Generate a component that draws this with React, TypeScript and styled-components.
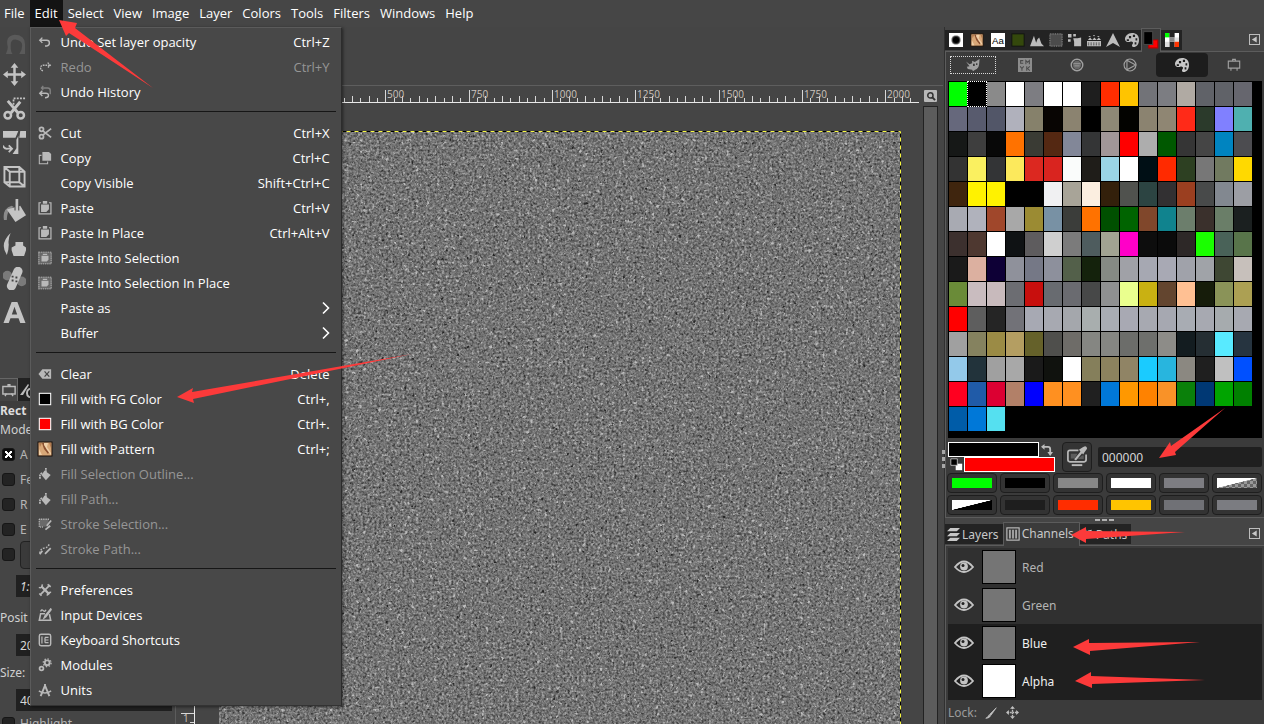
import React from "react";
import styled, { createGlobalStyle, css } from "styled-components";

const UI_FONT = `"Open Sans", "Noto Sans", sans-serif`;
const DOCK_FONT = `"Noto Sans", "DejaVu Sans", sans-serif`;

const GlobalStyle = createGlobalStyle`
  * { box-sizing: border-box; }
  body {
    margin: 0;
    background: #454545;
    color: #fff;
    font-family: ${UI_FONT};
    font-size: 13px;
    overflow: hidden;
  }
  button, input { font: inherit; color: inherit; margin: 0; }
  button { border: 0; padding: 0; background: none; cursor: default; }
`;

/* ---------- shell ---------- */

const Shell = styled.div`
  position: relative;
  display: flex;
  flex-direction: column;
  height: 100vh;
  overflow: hidden;
`;

const MenuBar = styled.nav`
  display: flex;
  height: 27px;
  flex: none;
  margin-left: -1px;
  background: #464646;
  position: relative;
  z-index: 2;
`;

const MenuSlot = styled.div`
  position: relative;
  display: flex;
`;

const MenuTitle = styled.button<{ $open?: boolean }>`
  padding: 0 5px 1px;
  background: ${(p) => (p.$open ? "#131313" : "transparent")};
`;

const Workspace = styled.main`
  display: flex;
  flex: 1;
  min-height: 0;
`;

/* ---------- drop-down menu ---------- */

const Dropdown = styled.div`
  position: absolute;
  top: 100%;
  left: 0;
  width: 312px;
  padding: 2px 0;
  background: #484848;
  border: 1px solid #5b5b5b;
  border-right-color: #2c2c2c;
  border-bottom-color: #333;
  box-shadow: 1px 1px 3px rgba(0, 0, 0, 0.5);
`;

const MenuRow = styled.button<{ $off?: boolean }>`
  display: flex;
  align-items: center;
  width: 100%;
  height: 25px;
  padding: 0 11px 2px 6px;
  text-align: left;
  color: ${(p) => (p.$off ? "#969696" : "#fff")};
`;

const MenuIcon = styled.span`
  display: flex;
  justify-content: center;
  width: 16px;
  margin-right: 8px;
  color: #b9b9b9;
`;

const MenuLabel = styled.span`
  flex: 1;
  white-space: nowrap;
`;

const MenuRule = styled.hr`
  height: 1px;
  margin: 6px 5px 9px;
  border: 0;
  background: #161616;
`;

/* ---------- toolbox column ---------- */

const ToolColumn = styled.aside`
  display: flex;
  flex-direction: column;
  flex: none;
  width: 176px;
  overflow: hidden;
  border-right: 1px solid #5c5c5c;
  font-family: ${DOCK_FONT};
  font-size: 12px;
  color: #d0d0d0;
  background: #454545;
`;

const ToolList = styled.div`
  display: flex;
  flex-direction: column;
  height: 351px;
  flex: none;
`;

const ToolButton = styled.button<{ $short?: boolean }>`
  display: flex;
  align-items: center;
  justify-content: center;
  width: 28px;
  height: ${(p) => (p.$short ? 30 : 34)}px;
  flex: none;
  color: #c4c4c4;
`;

const ToolTabs = styled.div`
  display: flex;
  height: 23px;
  flex: none;
`;

const ToolTab = styled.button<{ $on?: boolean }>`
  display: flex;
  align-items: center;
  justify-content: center;
  width: 18px;
  background: ${(p) => (p.$on ? "#454545" : "#222")};
  border-top: 1px solid ${(p) => (p.$on ? "#666" : "#222")};
  border-right: 1px solid ${(p) => (p.$on ? "#666" : "#222")};
  color: #bcbcbc;
`;

const OptionTitle = styled.h2`
  margin: 0;
  height: 19px;
  flex: none;
  line-height: 19px;
  font-size: 12px;
  font-weight: 700;
  color: #dcdcdc;
  background: #3d3d3d;
`;

const OptionLabel = styled.div<{ $top?: number }>`
  height: 20px;
  flex: none;
  line-height: 20px;
  margin-top: ${(p) => p.$top || 0}px;
`;

const CheckGroup = styled.div`
  flex: none;
  margin-top: 2px;
`;

const CheckRow = styled.label`
  display: flex;
  align-items: center;
  gap: 5px;
  height: 25px;
  padding-left: 2px;
  flex: none;
  white-space: nowrap;
  color: #b5b5b5;
`;

const CheckBox = styled.input`
  appearance: none;
  width: 13px;
  height: 13px;
  margin: 0;
  flex: none;
  border: 1px solid #161616;
  border-radius: 3px;
  background: #232323;
  &:checked {
    background:
      linear-gradient(45deg, transparent 38%, #fff 38%, #fff 62%, transparent 62%) center / 7px 7px no-repeat,
      linear-gradient(-45deg, transparent 38%, #fff 38%, #fff 62%, transparent 62%) center / 7px 7px no-repeat,
      #0c0c0c;
  }
`;

const Combo = styled.button`
  flex: 1;
  height: 28px;
  margin-right: 4px;
  background: #3a3a3a;
  border: 1px solid #222;
  border-radius: 4px;
`;

const OptionInput = styled.input<{ $italic?: boolean; $top: number }>`
  width: 156px;
  height: 22px;
  margin-top: ${(p) => p.$top}px;
  margin-left: 16px;
  padding: 0 4px;
  flex: none;
  border: 0;
  background: #202020;
  color: #d6d6d6;
  font-style: ${(p) => (p.$italic ? "italic" : "normal")};
`;

/* ---------- image window ---------- */

const ImageWindow = styled.section`
  display: flex;
  flex-direction: column;
  flex: 1;
  min-width: 0;
  padding: 58px 1px 0 0;
  background: #454545;
`;

const RulerRow = styled.div`
  display: flex;
  align-items: flex-end;
  height: 18px;
  flex: none;
  border-top: 1px solid #5e5e5e;
  padding-left: 19px;
`;

const HRuler = styled.svg`
  display: block;
  flex: 1;
  min-width: 0;
  height: 17px;
  overflow: hidden;
`;

const ZoomButton = styled.button`
  display: flex;
  align-items: center;
  justify-content: center;
  width: 13px;
  height: 12px;
  margin: 0 6px 1px 5px;
  background: #b8b8b8;
  color: #333;
  border-radius: 1px;
`;

const CanvasRow = styled.div`
  display: flex;
  flex: 1;
  min-height: 0;
`;

const VRuler = styled.svg`
  display: block;
  width: 19px;
  height: 100%;
  flex: none;
`;

const CanvasImage = styled.div`
  flex: 1;
  min-width: 0;
  margin: 28px 22px 0 24px;
`;

const Marquee = styled.svg`
  display: block;
  width: 100%;
  height: 100%;
`;

const ScrollTrack = styled.div`
  width: 15px;
  margin: 3px 5px 0 0;
  flex: none;
  background: #5c5c5c;
  border: 1px solid #222;
  border-bottom: 0;
`;

/* ---------- right dock ---------- */

const Dock = styled.aside`
  position: relative;
  display: flex;
  flex-direction: column;
  flex: none;
  width: 320px;
  border-left: 1px solid #303030;
  background: #454545;
  font-family: ${DOCK_FONT};
  font-size: 12px;
  color: #c8c8c8;
`;

const DockTabs = styled.div`
  display: flex;
  align-items: flex-end;
  height: 25px;
  flex: none;
  border-bottom: 1px solid #5c5c5c;
`;

const IconTab = styled.button<{ $on?: boolean }>`
  display: flex;
  align-items: center;
  justify-content: center;
  width: ${(p) => (p.$on ? 20 : 19)}px;
  height: ${(p) => (p.$on ? 24 : 20)}px;
  margin-bottom: ${(p) => (p.$on ? -1 : 1)}px;
  padding-bottom: ${(p) => (p.$on ? 2 : 0)}px;
  background: ${(p) => (p.$on ? "#3b3b3b" : "#232323")};
  color: #bdbdbd;
  ${(p) =>
    p.$on &&
    css`
      border: 1px solid #5c5c5c;
      border-bottom: 0;
    `}
`;

const WideIconTab = styled(IconTab)`
  width: 21px;
`;

const TabMenu = styled.button`
  display: flex;
  align-items: center;
  justify-content: center;
  width: 11px;
  height: 11px;
  margin: 0 4px 6px auto;
  border: 1px solid #bdbdbd;
  color: #c8c8c8;
`;

const PalettePane = styled.div`
  background: #3b3b3b;
  border-left: 1px solid #5c5c5c;
  border-bottom: 1px solid #5c5c5c;
  flex: none;
  height: 466px;
`;

const SelectorTabs = styled.div`
  display: flex;
  height: 29px;
  padding: 1px 4px 4px 1px;
`;

const SelectorTab = styled.button<{ $on?: boolean; $focus?: boolean }>`
  display: flex;
  align-items: center;
  justify-content: center;
  flex: 1;
  border-radius: 4px;
  color: ${(p) => (p.$on ? "#c8c8c8" : "#a0a0a0")};
  background: ${(p) => (p.$on ? "#1d1d1d" : "transparent")};
  ${(p) =>
    p.$focus &&
    css`
      & > span { border-color: #d8d8d8; }
    `}
`;

const FocusRing = styled.span`
  display: flex;
  align-items: center;
  justify-content: center;
  width: 46px;
  height: 18px;
  border: 1px dotted transparent;
`;

const PaletteBox = styled.div`
  display: grid;
  grid-template-columns: repeat(16, 18px);
  grid-auto-rows: 24px;
  gap: 1px;
  align-content: start;
  height: 357px;
  margin: 0 2px;
  padding: 1px;
  background: #000;
`;

const Swatch = styled.button<{ $c: string; $on?: boolean }>`
  background: ${(p) => p.$c};
  outline: ${(p) => (p.$on ? "1px dotted #fff" : "none")};
`;

const ColorRow = styled.div`
  display: flex;
  height: 30px;
  margin: 4px 2px 1px;
`;

const ColorPair = styled.div`
  display: grid;
  grid-template-columns: 16px 75px 16px;
  grid-template-rows: 15px 15px;
  width: 107px;
`;

const Foreground = styled.button`
  grid-area: 1 / 1 / 2 / 3;
  background: #000;
  border: 1px solid #fff;
`;

const Background = styled.button`
  grid-area: 2 / 2 / 3 / 4;
  background: #f00;
  border: 1px solid #fff;
`;

const PairIcon = styled.button<{ $area: string }>`
  grid-area: ${(p) => p.$area};
  display: flex;
  align-items: center;
  justify-content: center;
  color: #bdbdbd;
`;

const PickButton = styled.button`
  display: flex;
  align-items: center;
  justify-content: center;
  width: 30px;
  margin-left: 7px;
  border: 1px solid #1e1e1e;
  border-radius: 4px;
  background: #343434;
  color: #b8b8b8;
`;

const HexInput = styled.input`
  flex: 1;
  min-width: 0;
  height: 20px;
  align-self: center;
  margin-left: 6px;
  padding: 0 4px;
  border: 0;
  border-radius: 2px;
  background: #1f1f1f;
  color: #d6d6d6;
`;

const HistoryGrid = styled.div`
  display: grid;
  grid-template-columns: repeat(6, 1fr);
  grid-auto-rows: 20px;
  gap: 2px 3px;
  padding: 0 2px 0 1px;
`;

const HistoryButton = styled.button`
  display: flex;
  padding: 4px;
  border: 1px solid #1e1e1e;
  border-radius: 4px;
  background: #333;
`;

const HistoryFill = styled.span<{ $c: string }>`
  flex: 1;
  background: ${(p) => p.$c};
`;

const Grip = styled.div`
  display: flex;
  justify-content: center;
  gap: 2px;
  height: 4px;
  flex: none;
  padding-top: 1px;
  & > i {
    width: 5px;
    height: 2px;
    background: #b0b0b0;
  }
`;

const SideGrip = styled.div`
  position: absolute;
  left: -3px;
  top: 423px;
  display: grid;
  gap: 3px;
  & > i { width: 3px; height: 4px; background: #a8a8a8; }
`;

const TextTabs = styled(DockTabs)`
  height: 24px;
`;

const TextTab = styled.button<{ $on?: boolean }>`
  display: flex;
  align-items: center;
  gap: 2px;
  height: ${(p) => (p.$on ? 24 : 20)}px;
  margin-bottom: ${(p) => (p.$on ? -1 : 1)}px;
  padding: ${(p) => (p.$on ? "0 5px 2px 2px" : "0 4px 0 2px")};
  background: ${(p) => (p.$on ? "#3b3b3b" : "#232323")};
  border: solid ${(p) => (p.$on ? "#5c5c5c" : "#232323")};
  border-width: ${(p) => (p.$on ? "1px 1px 0 1px" : "0")};
`;

const ChannelPane = styled.div`
  display: flex;
  flex-direction: column;
  flex: 1;
  border-left: 1px solid #5c5c5c;
  background: #3b3b3b;
  padding: 2px 2px 0;
`;

const ChannelList = styled.ul`
  margin: 0;
  padding: 0;
  list-style: none;
  background: #303030;
`;

const ChannelRow = styled.li<{ $on: boolean }>`
  display: flex;
  align-items: center;
  height: 38px;
  padding-left: 6px;
  background: ${(p) => (p.$on ? "#1f1f1f" : "transparent")};
  color: ${(p) => (p.$on ? "#f0f0f0" : "#b4b4b4")};
`;

const EyeButton = styled.button`
  display: flex;
  color: #c4c4c4;
`;

const Thumb = styled.span<{ $c: string }>`
  width: 34px;
  height: 34px;
  margin: 0 6px 0 8px;
  border: 1px solid #000;
  background: ${(p) => p.$c};
`;

const LockRow = styled.div`
  display: flex;
  align-items: center;
  gap: 6px;
  height: 25px;
  color: #9c9c9c;
`;

const LockButton = styled.button`
  display: flex;
  align-items: center;
  justify-content: center;
  width: 16px;
  color: #c0c0c0;
`;

const Arrows = styled.svg`
  position: absolute;
  inset: 0;
  width: 100%;
  height: 100%;
  z-index: 3;
  pointer-events: none;
  fill: #fc3a3a;
`;

/* ---------- icons ---------- */

type IconProps = { name: string; size?: number; box?: number };

const STROKE = { fill: "none", stroke: "currentColor", strokeWidth: 1.6 } as const;

const shapes: Record<string, React.ReactNode> = {
  undo: <path d="M5 3 2 6l3 3M2.500 6H10q3 0 3 3t-3 3.500H8" {...STROKE} />,
  redo: <path d="M11 3l3 3-3 3M13.500 6H6Q3 6 3 9t3 3.500" {...STROKE} strokeDasharray="2 1" />,
  history: (
    <>
      <path d="M6 1 4 3.500l2 2M4.500 3.500H11q3 0 3 3v4" {...STROKE} opacity=".5" />
      <path d="M5 6.500 2 9.500l3 3M2.500 9.500H9q3 0 3 2.500t-4 2.500" {...STROKE} />
    </>
  ),
  cut: (
    <>
      <circle cx="4" cy="3.800" r="2.300" {...STROKE} strokeWidth="2" />
      <circle cx="4" cy="12.200" r="2.300" {...STROKE} strokeWidth="2" />
      <path d="M5.500 5.500 15 13M5.500 10.500 15 3" {...STROKE} strokeWidth="2" />
    </>
  ),
  copy: (
    <>
      <path d="M4 5H1.500v9.500H11V12" {...STROKE} strokeWidth="1.200" />
      <path d="M5 1h7.500L15 3.500V11H5z" fill="currentColor" />
    </>
  ),
  paste: (
    <>
      <path d="M3.500 2H1.200v12.800h13.600V2H12.500" {...STROKE} strokeWidth="1.400" />
      <path d="M5.500 0h5v3h-5zM3.500 4h9v5.500l-3 3h-6z" fill="currentColor" />
    </>
  ),
  pasteInto: (
    <>
      <path d="M0 1h16v14H0z" fill="currentColor" opacity=".28" />
      <path d="M1 1.500h14v13H1z" {...STROKE} strokeDasharray="1.500 1" opacity=".6" />
      <path d="M5.500 3h5v1.500h-5zM4 5.500h8V10l-2 2H4z" fill="currentColor" />
    </>
  ),
  clear: (
    <path
      d="M5 2.500h10v11H5L.5 8zM7 5.500 9.200 8 7 10.500l1 1L10.200 9l2.200 2.500 1-1L11.200 8l2.200-2.500-1-1L10.200 7 8 4.500z"
      fill="currentColor"
      fillRule="evenodd"
    />
  ),
  fg: <rect x="1.500" y="1.500" width="13" height="13" fill="#000" stroke="#fff" strokeWidth="1.200" />,
  bg: <rect x="1.500" y="1.500" width="13" height="13" fill="#f00" stroke="#fff" strokeWidth="1.200" />,
  pattern: (
    <>
      <rect x="1" y="1" width="14" height="14" fill="#d9a878" stroke="#1a0f08" />
      <path d="M5 2h3l2 5 2 4-1 2-4-5z" fill="#8a5030" />
      <path d="M7 2h4l-1 4 4 6v2l-4-5-3-5zM2 8l3 6H2z" fill="#f0d0a8" />
      <path d="M2 2h3L3 6zM12 2h2v5z" fill="#b47c50" />
    </>
  ),
  bucket: (
    <>
      <path d="M7.500 4 14.500 9 9 15 4 9z" fill="currentColor" />
      <path d="M9 1v7M2.500 13.500Q1 7.500 5.500 7" {...STROKE} strokeWidth="2" strokeDasharray="2 .8" />
    </>
  ),
  strokeSel: (
    <>
      <path d="M1 2h11v9H1z" fill="currentColor" opacity=".3" />
      <path d="M1.500 2.500h12M1.500 2.500v9h5" {...STROKE} strokeDasharray="1 1" />
      <path d="M15 4 10 10M14 10 8.500 14.500" {...STROKE} strokeWidth="2" />
    </>
  ),
  strokePath: (
    <>
      <path d="M2 13Q3 7 7 7t6-5" {...STROKE} strokeDasharray="2 1.500" />
      <path d="M14.500 7 8 13.500M5 10l-3 4" {...STROKE} strokeWidth="2" />
    </>
  ),
  prefs: (
    <>
      <path d="M4 4l9 9" {...STROKE} strokeWidth="2.600" />
      <path d="M13.500 2.500 3 13" {...STROKE} strokeWidth="2" />
      <path d="M1 5q3.500 1.500 4-3.500M11 1.500l3.500 3M10.500 14.500q.5-4 4.500-4M1.500 12l2.500 2.500" {...STROKE} strokeWidth="1.800" />
    </>
  ),
  input: (
    <>
      <path d="M8 6.500H3L1.500 14h13L13 7" {...STROKE} strokeWidth="1.800" />
      <path d="M14.500 1 8 9l-1 2.500L9 10l6-8zM3 4q1-3 3-1t3-1" {...STROKE} />
    </>
  ),
  keyboard: (
    <>
      <rect x="1.500" y="1.500" width="13" height="13" rx="2" {...STROKE} />
      <path d="M4.500 4v8M8 5h4M8 8h4M8 11h4M8 5v6" {...STROKE} strokeWidth="1.400" />
    </>
  ),
  modules: (
    <>
      <circle cx="10.500" cy="5.500" r="2.800" {...STROKE} strokeWidth="2.200" />
      <circle cx="10.500" cy="5.500" r="4.500" {...STROKE} strokeWidth="1.500" strokeDasharray="1.600 1.900" />
      <circle cx="4" cy="12" r="2.200" {...STROKE} strokeWidth="2" />
    </>
  ),
  units: (
    <>
      <path d="M8 1v3M8 3 3 15M8 3l5 12" {...STROKE} strokeWidth="2.200" />
      <path d="M1 9q7 5 14 0" {...STROKE} />
    </>
  ),
  chevron: <path d="M9 2.500 14.500 8 9 13.500" fill="none" stroke="#fff" strokeWidth="1.600" />,
  warp: <path d="M3 24q2-4 2-7-3-12 7-13 11 0 11 10v10h-6q3-4 3-9t-6-6-6 6 2 9z" fill="#5a5a5a" />,
  move: (
    <>
      <path d="M12 3v18M3 12h18" {...STROKE} strokeWidth="2.600" />
      <path d="M12 0l4 5H8zM12 24l4-5H8zM0 12l5-4v8zM24 12l-5-4v8z" fill="currentColor" />
    </>
  ),
  scissors: (
    <>
      <circle cx="5" cy="19" r="3.400" {...STROKE} strokeWidth="2.600" />
      <circle cx="18.500" cy="19" r="3.400" {...STROKE} strokeWidth="2.600" />
      <path d="M5 4l11 13M18 5 8 17" {...STROKE} strokeWidth="3" />
      <path d="M11 8V1.500h13" {...STROKE} strokeWidth="1.800" strokeDasharray="2 1.300" />
    </>
  ),
  crop: (
    <>
      <path d="M0 0h16L13 7H0zM18 0h6v7h-7zM16 5v19h-6l4-6V9z" fill="currentColor" />
      <path d="M0 15q1 4 5 3.500h4M6 15l3.500 3.500L6 22" {...STROKE} strokeWidth="1.800" />
    </>
  ),
  cube: (
    <path
      d="M1.500 2H17l5.500 5v15.500H7L1.500 18zM1.500 2 7 7h15.500M7 7v15.500M1.500 18H17l5.500 4.500M17 2v16"
      {...STROKE}
      strokeWidth="2"
    />
  ),
  fill: (
    <>
      <path d="M4 11l14-4 6 10-11 7z" fill="currentColor" />
      <path d="M14.500 1v11" stroke="#454545" strokeWidth="5" />
      <path d="M14.500 0v12" stroke="currentColor" strokeWidth="2.800" strokeLinecap="round" />
      <path d="M1 22Q-1 10 9 7l2 1-5 5q-2 3-2 9z" fill="currentColor" opacity=".55" />
    </>
  ),
  clone: (
    <>
      <path d="M4 23Q-4 11 8 0 5 6 6 12q0 6-2 11z" fill="currentColor" />
      <path d="M9 15l4-2V9.500h8V13l3 2v3l-2 6H11l-2-6z" fill="currentColor" />
    </>
  ),
  heal: (
    <>
      <circle cx="4.500" cy="9" r="5" fill="#7a7a7a" />
      <circle cx="19.500" cy="15" r="5" fill="#7a7a7a" />
      <rect x="7.500" y="-1" width="9.500" height="26" rx="4.500" transform="rotate(24 12 12)" fill="currentColor" />
      <path d="M9 9h2v2H9zM13 10h2v2h-2zM9 13h2v2H9zM13 14h2v2h-2z" fill="#444" />
    </>
  ),
  text: <path d="M9 1h6l8.500 22H18l-1.800-5H7.800L6 23H.5zM12 6l-2.800 8h5.600z" fill="currentColor" fillRule="evenodd" />,
  options: (
    <>
      <path d="M1 4h14v8.500H1z" {...STROKE} />
      <path d="M5 12l-1.500 3M11 12l1.500 3M7 4V2h2v2" {...STROKE} />
    </>
  ),
  device: (
    <>
      <path d="M1 13 9 2l1 1-6 10z" fill="currentColor" />
      <path d="M14 7q-6-1-6 4t6 4" {...STROKE} strokeWidth="2" />
    </>
  ),
  brush: (
    <>
      <rect width="16" height="16" fill="#fff" />
      <circle cx="8" cy="8" r="5.500" fill="#999" />
      <circle cx="8" cy="8" r="4.500" fill="#333" />
      <circle cx="8" cy="8" r="3.500" fill="#000" />
    </>
  ),
  font: (
    <>
      <rect width="16" height="16" fill="#fff" />
      <text x="8" y="12" textAnchor="middle" fontSize="11" fontFamily="Liberation Sans, sans-serif" fill="#000">Aa</text>
    </>
  ),
  moss: <rect x="1" y="1" width="14" height="14" fill="#34480c" stroke="#111" />,
  histogram: <path d="M0 15 4.500 3 7 11l1.500-4L10.500 5l2.500 7 3 3z" fill="currentColor" />,
  selection: <rect x="1" y="1" width="14" height="14" fill="#4c4c4c" stroke="#aaa" strokeDasharray="1 1" />,
  history2: (
    <>
      <path d="M0 1h4v4H0zM6 1h3v3H6zM0 7h3v3H0z" fill="currentColor" />
      <path d="M6 6h5l4-1v10H7V10z" fill="currentColor" />
    </>
  ),
  grid: (
    <>
      <path d="M0 9h16v6H0zM1 8l2.500-3L6 8l2.500-3L11 8l2.500-3L16 8z" fill="currentColor" />
      <path d="M1 11.500h14M1 13.500h14" stroke="#333" strokeDasharray="1.500 1.500" />
      <path d="M2 4h2M7 3h2M12 4h2" stroke="currentColor" />
    </>
  ),
  pointer: <path d="M8 0l8 16-8-4.500L0 16z" fill="currentColor" />,
  palette: (
    <path
      fillRule="evenodd"
      fill="currentColor"
      d="M8 0c5 0 8 3 8 8 0 5-3 8-6 8s-2-3-1-4-1-3-3-2-6 0-6-3 3-7 8-7zM4.500 3.500v2.500h2.500V3.500zM9 2v2.500h2.500V2zM12 6v2.500h2V6zM2 7v2h2.500V7zM11 10.500V13h2v-2.500z"
    />
  ),
  fgbg: (
    <>
      <path d="M8 8h6v7H6v-3" fill="#f00" stroke="#b00" />
      <rect x="1.500" y="0.500" width="8" height="11.500" fill="#000" stroke="#444" />
    </>
  ),
  colormap: (
    <>
      <rect width="16" height="16" fill="#fff" />
      <path d="M0 0h5v5H0z" fill="#0f0" />
      <path d="M5 0h6v5H5zM5 10h6v6H5z" fill="#222" />
      <path d="M11 5h5v5h-5zM0 10h5v6H0z" fill="#ddd" />
      <path d="M5 5h6v5H5z" fill="#888" />
      <path d="M11 10h5v6h-5z" fill="#f30" />
    </>
  ),
  wilber: (
    <path
      fill="currentColor"
      fillRule="evenodd"
      d="M0 4l4 3 3-1V3l3 1.500L15.500 1 15 7q-.5 5-4.500 6.500L8 15l-1-1.500-5-1-1-2.500 3-.5zM8 6.500V9h2V6.500zM11.500 6v2h1.500V6z"
    />
  ),
  cmyk: (
    <>
      <rect width="16" height="16" fill="#8c8c8c" />
      <path d="M6 3H3v3h3M9 7V3l2 2 2-2v4M2.500 9.500 4.500 12l2-2.500M4.500 12v2.500M10 9.500v5M13.500 9.500 11 12l2.500 2.500" {...STROKE} stroke="#4a4a4a" strokeWidth="1.200" />
    </>
  ),
  water: (
    <>
      <circle cx="8" cy="8" r="6.600" {...STROKE} />
      <circle cx="8" cy="8" r="4.800" fill="currentColor" opacity=".45" />
      <path d="M4 6.500h8M5 9h6" stroke="currentColor" />
    </>
  ),
  wheel: (
    <>
      <circle cx="8" cy="8" r="6.800" {...STROKE} strokeWidth="1.300" />
      <path d="M4.500 2.500 14.500 8l-10 5.500z" {...STROKE} strokeWidth="1.300" />
    </>
  ),
  scales: (
    <>
      <path d="M1.500 3.500h13v8h-13z" {...STROKE} strokeWidth="1.300" />
      <path d="M4.500 11.500v3M11.500 11.500v3M6.500 3.500v-2h3v2" {...STROKE} strokeWidth="1.300" />
    </>
  ),
  triangle: <path d="M13 1v14L2 8z" fill="currentColor" />,
  magnifier: (
    <>
      <circle cx="7" cy="7" r="4.200" fill="none" stroke="currentColor" strokeWidth="2.400" />
      <path d="M10 10l4.500 4.500" stroke="currentColor" strokeWidth="3" />
    </>
  ),
  swap: (
    <>
      <path d="M4 4h6q3 0 3 3v5" {...STROKE} strokeWidth="2.600" />
      <path d="M0 4l5-4v8zM13 17l-4-5.500h8z" fill="currentColor" />
    </>
  ),
  reset: (
    <>
      <path d="M7 7h8v8H7z" fill="#fff" />
      <path d="M1 1h8v8H1z" fill="#000" stroke="#ccc" />
    </>
  ),
  pick: (
    <>
      <path d="M13 4.500H4Q2 4.500 2 6.500v8q0 2 2 2h15q2 0 2-2V9" {...STROKE} strokeWidth="1.800" />
      <path d="M6 19h11v2H6z" fill="currentColor" />
      <path d="M5 8h7l-3 5H5zM17 10h1.500v3.500H12z" fill="currentColor" opacity=".3" />
      <path d="M9.500 14.500 17 5.500" stroke="currentColor" strokeWidth="2.400" />
      <path d="M13.500 4l2-1.500L18 1q4-2 4 2l-3 4-1 2z" fill="currentColor" />
    </>
  ),
  layers: <path d="M4 0h12l-4 4H0zM4 6h12l-4 4H0zM4 12h12l-4 4H0z" fill="currentColor" />,
  channels: (
    <>
      <rect x="1" y="1" width="14" height="14" {...STROKE} strokeWidth="1.200" />
      <path d="M4.500 3v10M8 3v10M11.500 3v10" stroke="currentColor" strokeWidth="1.600" />
    </>
  ),
  paths: <path d="M3 14Q3 4 13 3M1 3h4v4H1z" {...STROKE} />,
  eye: (
    <>
      <path d="M1 10Q10-1 19 10 10 20 1 10z" fill="none" stroke="currentColor" strokeWidth="1.800" />
      <circle cx="10" cy="9.500" r="3.900" fill="currentColor" />
      <circle cx="9" cy="8.500" r="1.500" fill="#222" />
    </>
  ),
  paint: <path d="M15 1 8 11l-2-1zM7.500 11.500Q6 15 1 15q3-1 4-4z" fill="currentColor" stroke="currentColor" />,
  lockMove: (
    <>
      <path d="M8 2v12M2 8h12" {...STROKE} strokeDasharray="2 1" />
      <path d="M8 0l3 3.500H5zM8 16l3-3.500H5zM0 8l3.500-3v6zM16 8l-3.500-3v6z" fill="currentColor" />
    </>
  ),
};

const Icon = ({ name, size = 14, box = 16 }: IconProps) => (
  <svg width={size} height={size} viewBox={`0 0 ${box} ${box}`} aria-hidden="true">
    {shapes[name]}
  </svg>
);

/* ---------- data ---------- */

type Entry = { icon?: string; label: string; keys?: string; off?: boolean; sub?: boolean };

const EDIT_MENU: Entry[][] = [
  [
    { icon: "undo", label: "Undo Set layer opacity", keys: "Ctrl+Z" },
    { icon: "redo", label: "Redo", keys: "Ctrl+Y", off: true },
    { icon: "history", label: "Undo History" },
  ],
  [
    { icon: "cut", label: "Cut", keys: "Ctrl+X" },
    { icon: "copy", label: "Copy", keys: "Ctrl+C" },
    { label: "Copy Visible", keys: "Shift+Ctrl+C" },
    { icon: "paste", label: "Paste", keys: "Ctrl+V" },
    { icon: "paste", label: "Paste In Place", keys: "Ctrl+Alt+V" },
    { icon: "pasteInto", label: "Paste Into Selection" },
    { icon: "pasteInto", label: "Paste Into Selection In Place" },
    { label: "Paste as", sub: true },
    { label: "Buffer", sub: true },
  ],
  [
    { icon: "clear", label: "Clear", keys: "Delete" },
    { icon: "fg", label: "Fill with FG Color", keys: "Ctrl+," },
    { icon: "bg", label: "Fill with BG Color", keys: "Ctrl+." },
    { icon: "pattern", label: "Fill with Pattern", keys: "Ctrl+;" },
    { icon: "bucket", label: "Fill Selection Outline...", off: true },
    { icon: "bucket", label: "Fill Path...", off: true },
    { icon: "strokeSel", label: "Stroke Selection...", off: true },
    { icon: "strokePath", label: "Stroke Path...", off: true },
  ],
  [
    { icon: "prefs", label: "Preferences" },
    { icon: "input", label: "Input Devices" },
    { icon: "keyboard", label: "Keyboard Shortcuts" },
    { icon: "modules", label: "Modules" },
    { icon: "units", label: "Units" },
  ],
];

const TITLES = ["File", "Edit", "Select", "View", "Image", "Layer", "Colors", "Tools", "Filters", "Windows", "Help"];
const TOOLS = ["warp", "move", "scissors", "crop", "cube", "fill", "clone", "heal", "text"];
const CHECKS = ["A", "Fe", "R", "E"];

const PALETTE = `
00ff00 000000 8a8a8a ffffff 7d7d82 ffffff ffffff 1e1e1e ff2d00 ffc400 727378 7c7d82 b0aaa3 606268 606268 66666e
66687c 585b6e 525668 b0b1bc 86816b 080503 8b8370 000000 8e8876 030300 8b8370 8f8673 ff2a18 2b3a2b 8080ff 4fb0b0
161817 3e3e3e 080808 ff7200 3a3b34 542812 828798 343536 a09698 ff0000 adadad 005800 353535 454545 0084c0 4c4c50
333333 faf060 333436 fce95c dc2820 d9241f fafcfb 1f1d19 9ad4e6 ffffff 000f15 ff2a00 2d4022 777777 717a60 ffd900
3f250e fff200 fff200 000000 000000 f0f0f2 a8a498 fbeee0 33200b 50524e 2c4442 323032 9b3f20 484a4a 828890 9c9ea4
a8aab2 b0b2bc a0472b a8a8a8 9b8b33 7891a4 3b3d3a ff7200 005000 006400 80472b 10838e 6c7e6c 3a302c 6a7e68 1b2020
3c302e 4e3830 ffffff 0f1214 5e5c5e cfcfcf 7b7b7b 4e5c5e a1a392 ff00c8 0d0d0d 0b0b0b 2d2827 1aff00 496258 58744a
1a1a1a dcb0a0 0e0036 8f919b 757886 8d909c 53604a 14220c 858a84 a0a1a7 a6a8b2 a8a9b4 a0a2aa a0a3a8 3e4733 c7c0bb
6a8b38 c9bcbf c8babc 6c6d72 c80f0d 686b70 6a6b70 474848 8f9091 eaff8e c9b112 63452f ffc093 161c0a 8a9358 aca053
ff0000 5e5e5e 252525 727278 a7a9b3 a7a9b1 a4a7ac a8aeae a8acb3 a8a9b3 a7a9b1 a6a8b1 a8acb3 a7a9b1 a6abae a7a9b1
a0a0a0 85825f 9b8b45 b49e62 65612a 4f4f4c 6e6c68 858682 858682 6c6d6a 6e6f6c 8d8c88 131c20 252e33 58eaff 263440
93c9ea 22333b a0a0a0 a8a8a8 1a1a1a 10120e ffffff 857f5b 8c825e 908465 1acbff 28b5de 8b8881 1f1f1f c0c0c0 0050ff
ff0020 205ba8 dc0032 b28068 0000ff ff9020 ff9020 202020 0078d8 ff9800 ff8200 f99228 0a800a 003874 00a400 008000
005ca8 0078d8 55e0f0
`
  .trim()
  .split(/\s+/)
  .map((c) => `#${c}`);

const CHECKER = "repeating-conic-gradient(#666 0 25%, #999 0 50%) 0 0 / 6px 6px";
const HISTORY = [
  "#00ff00",
  "#000",
  "#878787",
  "#fff",
  "#7d7d82",
  `linear-gradient(to bottom right, #fff 49%, transparent 51%), ${CHECKER}`,
  "linear-gradient(to bottom right, #fff 49%, #000 51%)",
  "#1e1e1e",
  "#ff2d00",
  "#ffc400",
  "#707176",
  "#7b7c81",
];

const DOCK_TABS = ["brush", "pattern", "font", "moss", "histogram", "selection", "history2", "grid", "pointer", "palette", "fgbg", "colormap"];
const SELECTORS = ["wilber", "cmyk", "water", "wheel", "palette", "scales"];

const CHANNELS = [
  { name: "Red", color: "#757575", on: false },
  { name: "Green", color: "#757575", on: false },
  { name: "Blue", color: "#757575", on: true },
  { name: "Alpha", color: "#fff", on: true },
];

const ARROWS = [
  "59,20 77,23 75,28 153,88 69,33 66,36",
  "177,397 193,388 192,392 412,354 193,399 194,403",
  "1159,458 1170,442 1171,446 1225,408 1175,452 1176,455",
  "1071,535 1086,527 1086,531 1185,532 1086,539 1086,543",
  "1073,647 1089,639 1089,643 1200,642 1090,651 1090,655",
  "1075,681 1091,672 1091,676 1205,680 1092,684 1092,688",
];

/* ---------- parts ---------- */

// The zero mark of the ruler sits over the image's left edge; 250 units span 83.3px.
const RULER_ORIGIN = 24;
const UNIT = 1 / 3;

const HorizontalRuler = () => {
  const ticks = [];
  for (let v = -50; v <= 2100; v += 25) {
    const h = v % 250 === 0 ? 12 : v % 50 === 0 ? 6 : 4;
    ticks.push(<path key={v} d={`M${Math.floor(RULER_ORIGIN + v * UNIT) + 0.5} 16v${-h}`} stroke="#d8d8d8" />);
  }
  return (
    <HRuler>
      {ticks}
      {[500, 750, 1000, 1250, 1500, 1750, 2000].map((v) => (
        <text key={v} x={Math.floor(RULER_ORIGIN + v * UNIT) + 2} y="12" fontSize="10" fill="#cbc3bd">
          {v}
        </text>
      ))}
      <path d="M0 16.500H2000" stroke="#e8e8e8" />
    </HRuler>
  );
};

const VerticalRuler = () => {
  const ticks = [];
  for (let v = 0; v <= 1800; v += 25) {
    const w = v % 250 === 0 ? 13 : v % 50 === 0 ? 6 : 4;
    ticks.push(<path key={v} d={`M18 ${Math.round(27 + v * UNIT) + 0.5}h${-w}`} stroke="#d8d8d8" />);
  }
  return (
    <VRuler>
      {ticks}
      <path d="M18.500 0V2000" stroke="#e8e8e8" />
      <text x="7" y="619" fontSize="10" fill="#cbc3bd">1</text>
    </VRuler>
  );
};

const StoneTexture = () => (
  <Marquee role="img" aria-label="Speckled grey stone">
    <filter id="stone" x="0" y="0" width="100%" height="100%" colorInterpolationFilters="sRGB">
      <feTurbulence type="fractalNoise" baseFrequency="0.430" numOctaves="2" seed="7" result="n" />
      <feColorMatrix
        in="n"
        values="0.500 0.400 0 0 -0.005  0.500 0.400 0 0 -0.005  0.500 0.400 0 0 -0.005  0 0 0 0 1"
        result="base"
      />
      <feTurbulence type="fractalNoise" baseFrequency="0.270" numOctaves="2" seed="21" result="m" />
      <feColorMatrix in="m" values="0 0 0 0 0.74  0 0 0 0 0.74  0 0 0 0 0.74  0 6 0 0 -3.850" result="light" />
      <feColorMatrix in="m" values="0 0 0 0 0.14  0 0 0 0 0.14  0 0 0 0 0.14  0 0 6 0 -4.150" result="dark" />
      <feMerge>
        <feMergeNode in="base" />
        <feMergeNode in="light" />
        <feMergeNode in="dark" />
      </feMerge>
    </filter>
    <rect width="100%" height="100%" filter="url(#stone)" />
    <rect x="0.500" y="0.500" width="100%" height="2000" transform="translate(-1 0)" fill="none" stroke="#000" />
    <rect x="0.500" y="0.500" width="100%" height="2000" transform="translate(-1 0)" fill="none" stroke="#f6f640" strokeDasharray="4 4" />
  </Marquee>
);

const EditMenu = () => (
  <Dropdown role="menu">
    {EDIT_MENU.map((group, i) => (
      <React.Fragment key={i}>
        {i > 0 && <MenuRule />}
        {group.map((e) => (
          <MenuRow key={e.label} role="menuitem" $off={e.off} disabled={e.off}>
            <MenuIcon>{e.icon && <Icon name={e.icon} size={e.icon === "pattern" ? 16 : 14} />}</MenuIcon>
            <MenuLabel>{e.label}</MenuLabel>
            {e.keys && <span>{e.keys}</span>}
            {e.sub && <Icon name="chevron" size={16} />}
          </MenuRow>
        ))}
      </React.Fragment>
    ))}
  </Dropdown>
);

const ToolOptions = () => (
  <>
    <ToolTabs>
      <ToolTab $on aria-label="Tool options"><Icon name="options" /></ToolTab>
      <ToolTab aria-label="Device status"><Icon name="device" size={16} /></ToolTab>
    </ToolTabs>
    <OptionTitle>Rect</OptionTitle>
    <OptionLabel>Mode</OptionLabel>
    <CheckGroup>
      {CHECKS.map((label, i) => (
        <CheckRow key={label}>
          <CheckBox type="checkbox" defaultChecked={i === 0} />
          {label}
        </CheckRow>
      ))}
      <CheckRow>
        <CheckBox type="checkbox" aria-label="Fixed" />
        <Combo aria-label="Fixed rule" />
      </CheckRow>
    </CheckGroup>
    <OptionInput $italic $top={8} defaultValue="1:" aria-label="Aspect ratio" />
    <OptionLabel $top={11}>Posit</OptionLabel>
    <OptionInput $top={6} defaultValue="20" aria-label="Position" />
    <OptionLabel $top={7}>Size:</OptionLabel>
    <OptionInput $top={6} defaultValue="40" aria-label="Size" />
    <CheckRow>
      <CheckBox type="checkbox" />
      Highlight
    </CheckRow>
  </>
);

const PalettePanel = () => (
  <PalettePane>
    <SelectorTabs>
      {SELECTORS.map((s, i) => (
        <SelectorTab key={s} $on={i === 4} $focus={i === 0} aria-label={s}>
          <FocusRing><Icon name={s} size={14} /></FocusRing>
        </SelectorTab>
      ))}
    </SelectorTabs>
    <PaletteBox>
      {PALETTE.map((c, i) => (
        <Swatch key={i} $c={c} $on={i === 1} aria-label={c} />
      ))}
    </PaletteBox>
    <ColorRow>
      <ColorPair>
        <Foreground aria-label="Foreground" />
        <PairIcon $area="1 / 3 / 2 / 4" aria-label="Swap colors"><Icon name="swap" size={12} box={17} /></PairIcon>
        <PairIcon $area="2 / 1 / 3 / 2" aria-label="Reset colors"><Icon name="reset" size={13} /></PairIcon>
        <Background aria-label="Background" />
      </ColorPair>
      <PickButton aria-label="Pick color"><Icon name="pick" size={22} box={23} /></PickButton>
      <HexInput defaultValue="000000" aria-label="HTML notation" />
    </ColorRow>
    <HistoryGrid>
      {HISTORY.map((c, i) => (
        <HistoryButton key={i} aria-label={`Recent color ${i + 1}`}>
          <HistoryFill $c={c} />
        </HistoryButton>
      ))}
    </HistoryGrid>
  </PalettePane>
);

export default function App() {
  return (
    <>
      <GlobalStyle />
      <Shell>
        <MenuBar>
          {TITLES.map((t) => (
            <MenuSlot key={t}>
              <MenuTitle $open={t === "Edit"}>{t}</MenuTitle>
              {t === "Edit" && <EditMenu />}
            </MenuSlot>
          ))}
        </MenuBar>
        <Workspace>
          <ToolColumn>
            <ToolList>
              {TOOLS.map((t, i) => (
                <ToolButton key={t} $short={i === 0} aria-label={t}>
                  <Icon name={t} size={23} box={24} />
                </ToolButton>
              ))}
            </ToolList>
            <ToolOptions />
          </ToolColumn>
          <ImageWindow>
            <RulerRow>
              <HorizontalRuler />
              <ZoomButton aria-label="Zoom image"><Icon name="magnifier" size={10} /></ZoomButton>
            </RulerRow>
            <CanvasRow>
              <VerticalRuler />
              <CanvasImage><StoneTexture /></CanvasImage>
              <ScrollTrack />
            </CanvasRow>
          </ImageWindow>
          <Dock>
            <SideGrip><i /><i /><i /></SideGrip>
            <DockTabs>
              {DOCK_TABS.map((t, i) => {
                const Tab = i < 3 || i === 11 ? WideIconTab : IconTab;
                return (
                  <Tab key={t} $on={t === "fgbg"} aria-label={t}>
                    <Icon name={t} size={t === "fgbg" ? 18 : 14} />
                  </Tab>
                );
              })}
              <TabMenu aria-label="Configure tab"><Icon name="triangle" size={7} /></TabMenu>
            </DockTabs>
            <PalettePanel />
            <Grip><i /><i /><i /></Grip>
            <TextTabs>
              <TextTab><Icon name="layers" size={13} />Layers</TextTab>
              <TextTab $on><Icon name="channels" />Channels</TextTab>
              <TextTab><Icon name="paths" size={12} />Paths</TextTab>
              <TabMenu aria-label="Configure tab"><Icon name="triangle" size={7} /></TabMenu>
            </TextTabs>
            <ChannelPane>
              <ChannelList>
                {CHANNELS.map((c) => (
                  <ChannelRow key={c.name} $on={c.on}>
                    <EyeButton aria-label={`Toggle ${c.name}`}><Icon name="eye" size={20} box={20} /></EyeButton>
                    <Thumb $c={c.color} />
                    {c.name}
                  </ChannelRow>
                ))}
              </ChannelList>
              <LockRow>
                Lock:
                <LockButton aria-label="Lock pixels"><Icon name="paint" size={12} /></LockButton>
                <LockButton aria-label="Lock position"><Icon name="lockMove" size={13} /></LockButton>
              </LockRow>
            </ChannelPane>
          </Dock>
        </Workspace>
        <Arrows aria-hidden="true">
          {ARROWS.map((points) => (
            <polygon key={points} points={points} />
          ))}
        </Arrows>
      </Shell>
    </>
  );
}
